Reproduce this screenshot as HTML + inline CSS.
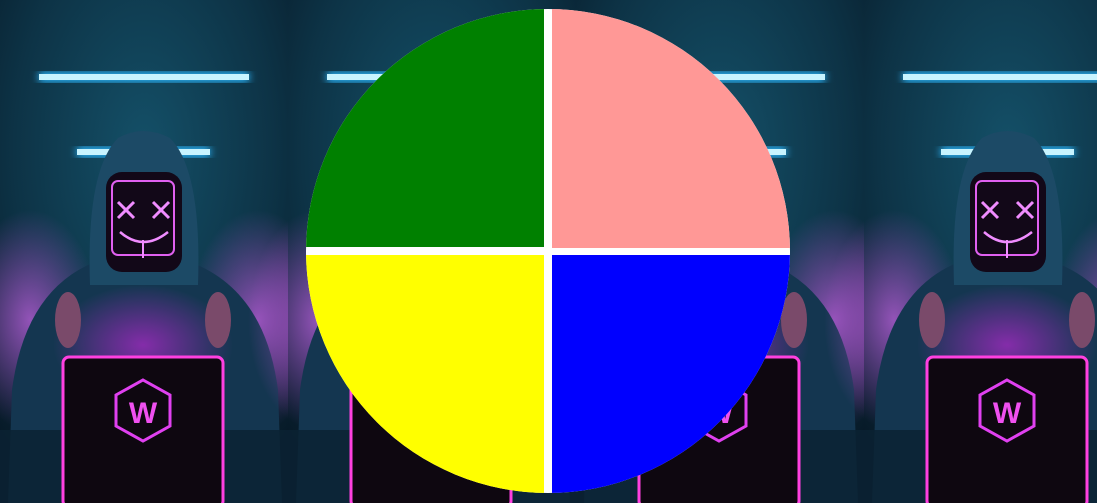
<!DOCTYPE html>
<html><head><style>
html,body{margin:0;padding:0;width:1097px;height:503px;overflow:hidden;background:#0b2a3a}
svg{display:block}
</style></head><body>
<svg width="1097" height="503" viewBox="0 0 1097 503" xmlns="http://www.w3.org/2000/svg">
<defs>
<radialGradient id="bg" cx="0.5" cy="0.3" r="0.75">
<stop offset="0" stop-color="#145068"/><stop offset="0.6" stop-color="#0d3346"/><stop offset="1" stop-color="#071a28"/>
</radialGradient>
<radialGradient id="smoke" cx="0.5" cy="0.5" r="0.5">
<stop offset="0" stop-color="#c060e0" stop-opacity="0.75"/><stop offset="1" stop-color="#b04fd0" stop-opacity="0"/>
</radialGradient>
<radialGradient id="glow" cx="0.5" cy="0.5" r="0.5">
<stop offset="0" stop-color="#a02ac0" stop-opacity="0.8"/><stop offset="1" stop-color="#a02ac0" stop-opacity="0"/>
</radialGradient>
<filter id="blur"><feGaussianBlur stdDeviation="4"/></filter>
<g id="tile">
<rect x="0" y="0" width="288" height="503" fill="url(#bg)"/>
<ellipse cx="30" cy="320" rx="70" ry="110" fill="url(#smoke)"/>
<ellipse cx="258" cy="320" rx="70" ry="110" fill="url(#smoke)"/>
<rect x="39" y="72" width="210" height="10" fill="#2ab8ff" filter="url(#blur)"/>
<rect x="39" y="74" width="210" height="6" fill="#c8f4ff"/>
<rect x="77" y="147" width="133" height="10" fill="#2ab8ff" filter="url(#blur)"/>
<rect x="77" y="149" width="133" height="6" fill="#c8f4ff"/>
<path d="M8 503 L12 390 Q25 290 95 262 L190 262 Q265 290 278 390 L282 503 Z" fill="#143650"/>
<path d="M90 285 Q86 170 118 138 Q143 124 170 138 Q202 170 198 285 Z" fill="#1c4a66"/>
<rect x="106" y="172" width="76" height="100" rx="16" fill="#120818"/>
<rect x="112" y="181" width="62" height="74" rx="6" fill="none" stroke="#e060f0" stroke-width="2"/>
<path d="M118 202 l16 16 m0 -16 l-16 16 M153 202 l16 16 m0 -16 l-16 16" stroke="#f08cff" stroke-width="3"/>
<path d="M120 232 Q143 252 168 232" stroke="#f08cff" stroke-width="2.5" fill="none"/>
<path d="M143 240 v18" stroke="#f08cff" stroke-width="2"/>
<ellipse cx="143" cy="345" rx="90" ry="60" fill="url(#glow)"/>
<ellipse cx="68" cy="320" rx="13" ry="28" fill="#7a4a6a"/>
<ellipse cx="218" cy="320" rx="13" ry="28" fill="#7a4a6a"/>
<rect x="0" y="430" width="288" height="73" fill="#0a2232" opacity="0.85"/>
<rect x="63" y="357" width="160" height="150" rx="6" fill="#0e0710" stroke="#ff40e0" stroke-width="3"/>
<polygon points="143,380 170,395 170,426 143,441 116,426 116,395" fill="none" stroke="#e040f0" stroke-width="3"/>
<text x="143" y="423" text-anchor="middle" font-family="Liberation Sans, sans-serif" font-weight="bold" font-size="30" fill="#f050f0">W</text>
</g>
</defs>
<use href="#tile" x="0"/>
<use href="#tile" x="288"/>
<use href="#tile" x="576"/>
<use href="#tile" x="864"/>
<clipPath id="c"><circle cx="548" cy="251" r="242"/></clipPath>
<g clip-path="url(#c)">
<rect x="300" y="0" width="500" height="503" fill="#fff"/>
<rect x="300" y="0" width="244" height="247" fill="#008000"/>
<rect x="552" y="0" width="250" height="248" fill="#ff9896"/>
<rect x="300" y="255" width="244" height="250" fill="#ffff00"/>
<rect x="552" y="255" width="250" height="250" fill="#0000ff"/>
</g>
</svg>
</body></html>
